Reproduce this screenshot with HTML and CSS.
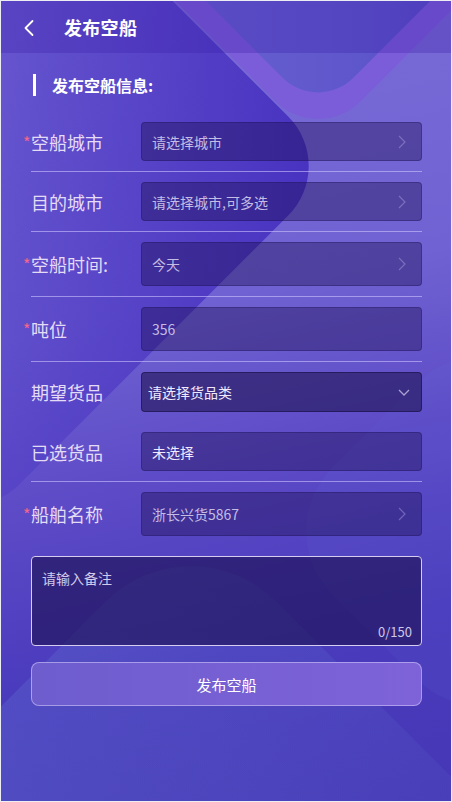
FILE: index.html
```html
<!DOCTYPE html>
<html lang="zh-CN">
<head>
<meta charset="utf-8">
<title>发布空船</title>
<link rel="stylesheet" href="styles.css">
</head>
<body>
<div class="app">
  <div class="bg">
    <div class="shape band"></div>
    <div class="shape inner"></div>
    <div class="shape dark"></div>
    <div class="shape bottom"></div>
    <div class="shape side"></div>
  </div>

  <header class="topbar">
    <svg class="back" width="12" height="18" viewBox="0 0 12 18"><polyline points="9.5,2 2.5,9 9.5,16" fill="none" stroke="#fff" stroke-width="1.8" stroke-linecap="round" stroke-linejoin="round"/></svg>
    <h1 class="title">发布空船</h1>
  </header>

  <main class="content">
    <div class="section-title"><span class="bar"></span><span>发布空船信息:</span></div>

    <div class="form">
      <div class="row">
        <div class="label req">空船城市</div>
        <div class="field"><span class="ph">请选择城市</span><svg class="arrow" width="8" height="14" viewBox="0 0 8 14"><polyline points="1,1 7,7 1,13" fill="none" stroke="currentColor" stroke-width="1.2"/></svg></div>
      </div>
      <div class="row">
        <div class="label">目的城市</div>
        <div class="field"><span class="ph">请选择城市,可多选</span><svg class="arrow" width="8" height="14" viewBox="0 0 8 14"><polyline points="1,1 7,7 1,13" fill="none" stroke="currentColor" stroke-width="1.2"/></svg></div>
      </div>
      <div class="row">
        <div class="label req">空船时间:</div>
        <div class="field tall"><span class="ph">今天</span><svg class="arrow" width="8" height="14" viewBox="0 0 8 14"><polyline points="1,1 7,7 1,13" fill="none" stroke="currentColor" stroke-width="1.2"/></svg></div>
      </div>
      <div class="row">
        <div class="label req">吨位</div>
        <div class="field tall"><span class="ph">356</span></div>
      </div>
      <div class="row noline">
        <div class="label">期望货品</div>
        <div class="field select"><span class="val">请选择货品类</span><svg class="down" width="12" height="7" viewBox="0 0 12 7"><polyline points="1,1 6,6 11,1" fill="none" stroke="currentColor" stroke-width="1.3"/></svg></div>
      </div>
      <div class="row">
        <div class="label">已选货品</div>
        <div class="field"><span class="val">未选择</span></div>
      </div>
      <div class="row noline last">
        <div class="label req">船舶名称</div>
        <div class="field tall"><span class="ph">浙长兴货5867</span><svg class="arrow" width="8" height="14" viewBox="0 0 8 14"><polyline points="1,1 7,7 1,13" fill="none" stroke="currentColor" stroke-width="1.2"/></svg></div>
      </div>
    </div>

    <div class="remark">
      <span class="remark-ph">请输入备注</span>
      <span class="count">0/150</span>
    </div>

    <button class="submit" type="button">发布空船</button>
  </main>
</div>
</body>
</html>
```

FILE: styles.css
```css
html, body {
  margin: 0;
  padding: 0;
}
body {
  background: #eceef3;
  padding: 1px;
  font-family: "Noto Sans CJK SC", "Noto Sans", sans-serif;
}
.app {
  position: relative;
  width: 450px;
  height: 800px;
  overflow: hidden;
  background: linear-gradient(168deg, #7b6dd7 0%, #7062d2 38%, #5c4ac6 58%, #4a3bbd 78%, #4537b5 100%);
  color: #fff;
}
.bg {
  position: absolute;
  inset: 0;
  z-index: 0;
  pointer-events: none;
}
.shape {
  position: absolute;
  transform: rotate(45deg);
}
.band {
  width: 370px;
  height: 370px;
  left: 132px;
  top: -304px;
  border-radius: 60px;
  background: #7b5cd9;
}
.inner {
  width: 300px;
  height: 300px;
  left: 167px;
  top: -250px;
  border-radius: 50px;
  background: linear-gradient(45deg, #6c66d2 0%, #5e56cb 60%, #5143c4 100%);
}
.dark {
  width: 520px;
  height: 520px;
  left: -291px;
  top: -95px;
  border-radius: 70px;
  background: linear-gradient(45deg, rgba(90, 70, 200, 0) 30%, rgba(78, 58, 196, 0.6) 62%, rgba(70, 48, 192, 1) 100%);
}
.bottom {
  width: 500px;
  height: 500px;
  left: -60px;
  top: 619px;
  border-radius: 120px;
  background: linear-gradient(45deg, rgba(100, 120, 210, 0.35), rgba(90, 100, 200, 0.12));
}
.side {
  width: 300px;
  height: 300px;
  left: 330px;
  top: 380px;
  border-radius: 90px;
  background: rgba(100, 110, 210, 0.12);
}

.topbar {
  position: relative;
  z-index: 1;
  height: 52px;
  display: flex;
  align-items: center;
  padding-left: 22px;
  background: rgba(60, 30, 170, 0.3);
}
.back {
  display: block;
  margin-top: 1px;
}
.title {
  margin: 0 0 0 29px;
  font-size: 18px;
  font-weight: 700;
  line-height: 24px;
  color: #fff;
  letter-spacing: 0.3px;
}

.content {
  position: relative;
  z-index: 1;
  padding: 0 29px 0 30px;
}
.section-title {
  display: flex;
  align-items: center;
  margin-top: 20px;
  margin-bottom: 16px;
  height: 23px;
  font-size: 16px;
  font-weight: 700;
  color: #fff;
}
.bar {
  width: 3px;
  height: 22px;
  background: #fff;
  margin-left: 2px;
  margin-right: 16px;
}

.row {
  display: flex;
  align-items: center;
  padding: 10px 0;
  border-bottom: 1px solid rgba(205, 195, 255, 0.6);
}
.row.noline {
  border-bottom: none;
}
.label {
  position: relative;
  width: 110px;
  flex: none;
  font-size: 18px;
  line-height: 24px;
  color: #e4dcf5;
}
.req::before {
  content: "*";
  position: absolute;
  left: -8px;
  top: 3px;
  font-size: 16px;
  line-height: 18px;
  color: #f2668a;
}
.field {
  flex: 1;
  box-sizing: border-box;
  height: 39px;
  display: flex;
  align-items: center;
  justify-content: space-between;
  padding: 0 15px 0 10px;
  background: rgba(25, 12, 75, 0.38);
  border: 1px solid rgba(30, 18, 90, 0.35);
  border-radius: 4px;
  font-size: 14px;
}
.field.tall {
  height: 44px;
}
.field.select {
  height: 40px;
  padding: 0 11px 0 6px;
  background: rgba(25, 14, 72, 0.55);
  border-color: rgba(20, 10, 60, 0.5);
}
.ph {
  color: #c4bce3;
}
.val {
  color: #efeaff;
}
.arrow {
  display: block;
  color: rgba(175, 165, 225, 0.45);
}
.down {
  display: block;
  color: #aaa2d2;
}

.remark {
  margin-top: 10px;
  box-sizing: border-box;
  height: 90px;
  display: flex;
  flex-direction: column;
  justify-content: space-between;
  padding: 12px 9px 5px 10px;
  background: rgba(28, 16, 82, 0.62);
  border: 1px solid #d6cdf0;
  border-radius: 4px;
}
.remark-ph {
  font-size: 14px;
  line-height: 18px;
  color: #d2cae9;
}
.count {
  align-self: flex-end;
  font-size: 13px;
  line-height: 16px;
  color: #cfc7e8;
}

.submit {
  display: block;
  width: 100%;
  height: 44px;
  margin-top: 16px;
  border: 1px solid rgba(215, 205, 255, 0.55);
  border-radius: 8px;
  background: linear-gradient(90deg, #6d5dcd 0%, #7660d3 50%, #7e63d8 100%);
  color: #fff;
  font-family: "Noto Sans CJK SC", "Noto Sans", sans-serif;
  font-size: 15px;
  cursor: pointer;
}
```
